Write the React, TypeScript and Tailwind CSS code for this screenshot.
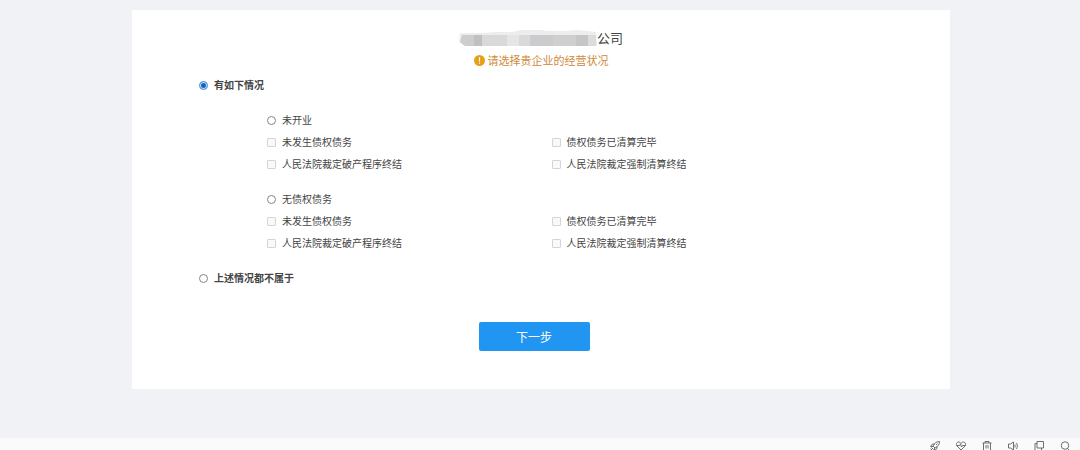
import { useState } from 'react';

const groups = [
  { id: 'notOpened', label: '未开业' },
  { id: 'noDebt', label: '无债权债务' },
];

const options = [
  '未发生债权债务',
  '债权债务已清算完毕',
  '人民法院裁定破产程序终结',
  '人民法院裁定强制清算终结',
];

const radioClass =
  'size-[9px] shrink-0 appearance-none rounded-full border border-[#858585] bg-white checked:border-[#5b9fe3] checked:bg-[#1565c0] checked:shadow-[inset_0_0_0_1px_#d5e6f8]';

function MaskedName() {
  return (
    <svg className="h-[18px] w-[138px] shrink-0" viewBox="0 0 138 18" aria-hidden="true">
      <path d="M1 4h23l13-1h16l9-2h21l5 1h20l10-1 19 2 1 13H4L0 13z" fill="#ededee" />
      <path d="M3 6h20v11H6l-5-4z" fill="#cdcdce" />
      <path d="M15 6h8v11h-8z" fill="#c0c0c1" />
      <path d="M23 6h25v11H23z" fill="#d9d9da" />
      <path d="M48 6h12v11H48z" fill="#e5e5e6" />
      <path d="M60 6h11v11H60z" fill="#d9d9da" />
      <path d="M71 6h23v11H71z" fill="#cbcbcd" />
      <path d="M94 6h23v11H94z" fill="#cfcfd0" />
      <path d="M117 6h12v11h-12z" fill="#c6c6c7" />
      <path d="M129 6h8v11h-8z" fill="#dcdcdd" />
    </svg>
  );
}

function ToolIcon({ children }) {
  return (
    <svg
      className="size-[10px]"
      viewBox="0 0 20 20"
      fill="none"
      stroke="#606060"
      strokeWidth="1.8"
      strokeLinejoin="round"
      aria-hidden="true"
    >
      {children}
    </svg>
  );
}

function Toolbar() {
  return (
    <footer className="flex h-3 shrink-0 justify-end gap-4 overflow-hidden bg-[#fafafa] pt-[3px] pr-[10px]">
      <ToolIcon>
        <path d="M19 1C13 1 9 4 6 10l4 4c6-3 9-7 9-13zM9 6H5l-4 5h5M14 11v4l-5 4v-5M6 14l-4 4M3 13l-2 2M7 17l-2 2" />
        <path d="M12 8l3-3" />
      </ToolIcon>
      <ToolIcon>
        <path d="M10 18L2 10C-1 6 2 2 5 2c2 0 4 1 5 3 1-2 3-3 5-3 3 0 6 4 3 8z" />
        <path d="M1 9h6l2-3 2 6 2-3h6" />
      </ToolIcon>
      <ToolIcon>
        <path d="M1 4h18M6 4V1h8v3M3 4v15h14V4M8 8v7M12 8v7" />
      </ToolIcon>
      <ToolIcon>
        <path d="M1 6h4l6-4v16l-6-4H1zM14 7v6M17 4c2 3 2 9 0 12" />
      </ToolIcon>
      <ToolIcon>
        <path d="M6 1h13v13H6zM6 5H2v14h13v-5" />
      </ToolIcon>
      <ToolIcon>
        <circle cx="10" cy="9" r="7.5" />
        <path d="M15 15l4 4" />
      </ToolIcon>
    </footer>
  );
}

export default function App() {
  const [status, setStatus] = useState('has');
  const [group, setGroup] = useState('');

  return (
    <div className="flex min-h-screen flex-col bg-[#f0f2f6] font-['Noto_Sans_CJK_SC',sans-serif] text-[10px] leading-[22px] text-[#444]">
      <main className="flex-1 pt-[10px] pr-[130px] pb-6 pl-[132px]">
        <form className="bg-white pt-[17px] pb-[38px]" onSubmit={(e) => e.preventDefault()}>
          <h1 className="flex items-center justify-center text-[13px]">
            <MaskedName />
            <span>公司</span>
          </h1>
          <p className="flex items-center justify-center gap-[3px] text-[11px] text-[#d08a38]">
            <svg className="size-[11px]" viewBox="0 0 11 11" aria-hidden="true">
              <circle cx="5.5" cy="5.5" r="5.5" fill="#e6a01a" />
              <path d="M5.5 2.2v4.2M5.5 7.6v1.2" stroke="#fff" strokeWidth="1.1" />
            </svg>
            请选择贵企业的经营状况
          </p>

          <div className="mt-[3px] flex flex-col gap-[13px] pr-[114px] pl-[67px]">
            <label className="flex items-center gap-[6px] self-start font-bold">
              <input
                type="radio"
                name="status"
                className={radioClass}
                checked={status === 'has'}
                onChange={() => setStatus('has')}
              />
              有如下情况
            </label>

            {groups.map((g) => (
              <div key={g.id} className="pl-[68px]">
                <label className="flex items-center gap-[6px]">
                  <input
                    type="radio"
                    name="group"
                    className={radioClass}
                    checked={group === g.id}
                    onChange={() => setGroup(g.id)}
                  />
                  {g.label}
                </label>
                <div className="grid grid-cols-2">
                  {options.map((option) => (
                    <label key={option} className="flex items-center gap-[6px]">
                      <input
                        type="checkbox"
                        className="size-[9px] shrink-0 appearance-none rounded-[1px] border border-[#d5d5d5] bg-[#f9f9f9] checked:bg-[#1673d1]"
                        disabled={group !== g.id}
                      />
                      {option}
                    </label>
                  ))}
                </div>
              </div>
            ))}

            <label className="flex items-center gap-[6px] self-start font-bold">
              <input
                type="radio"
                name="status"
                className={radioClass}
                checked={status === 'none'}
                onChange={() => setStatus('none')}
              />
              上述情况都不属于
            </label>
          </div>

          <div className="mt-[33px] flex justify-center pr-[14px]">
            <button
              type="submit"
              className="h-[29px] w-[111px] rounded-[2px] bg-[#2095f2] text-[12px] text-white"
            >
              下一步
            </button>
          </div>
        </form>
      </main>
      <Toolbar />
    </div>
  );
}
